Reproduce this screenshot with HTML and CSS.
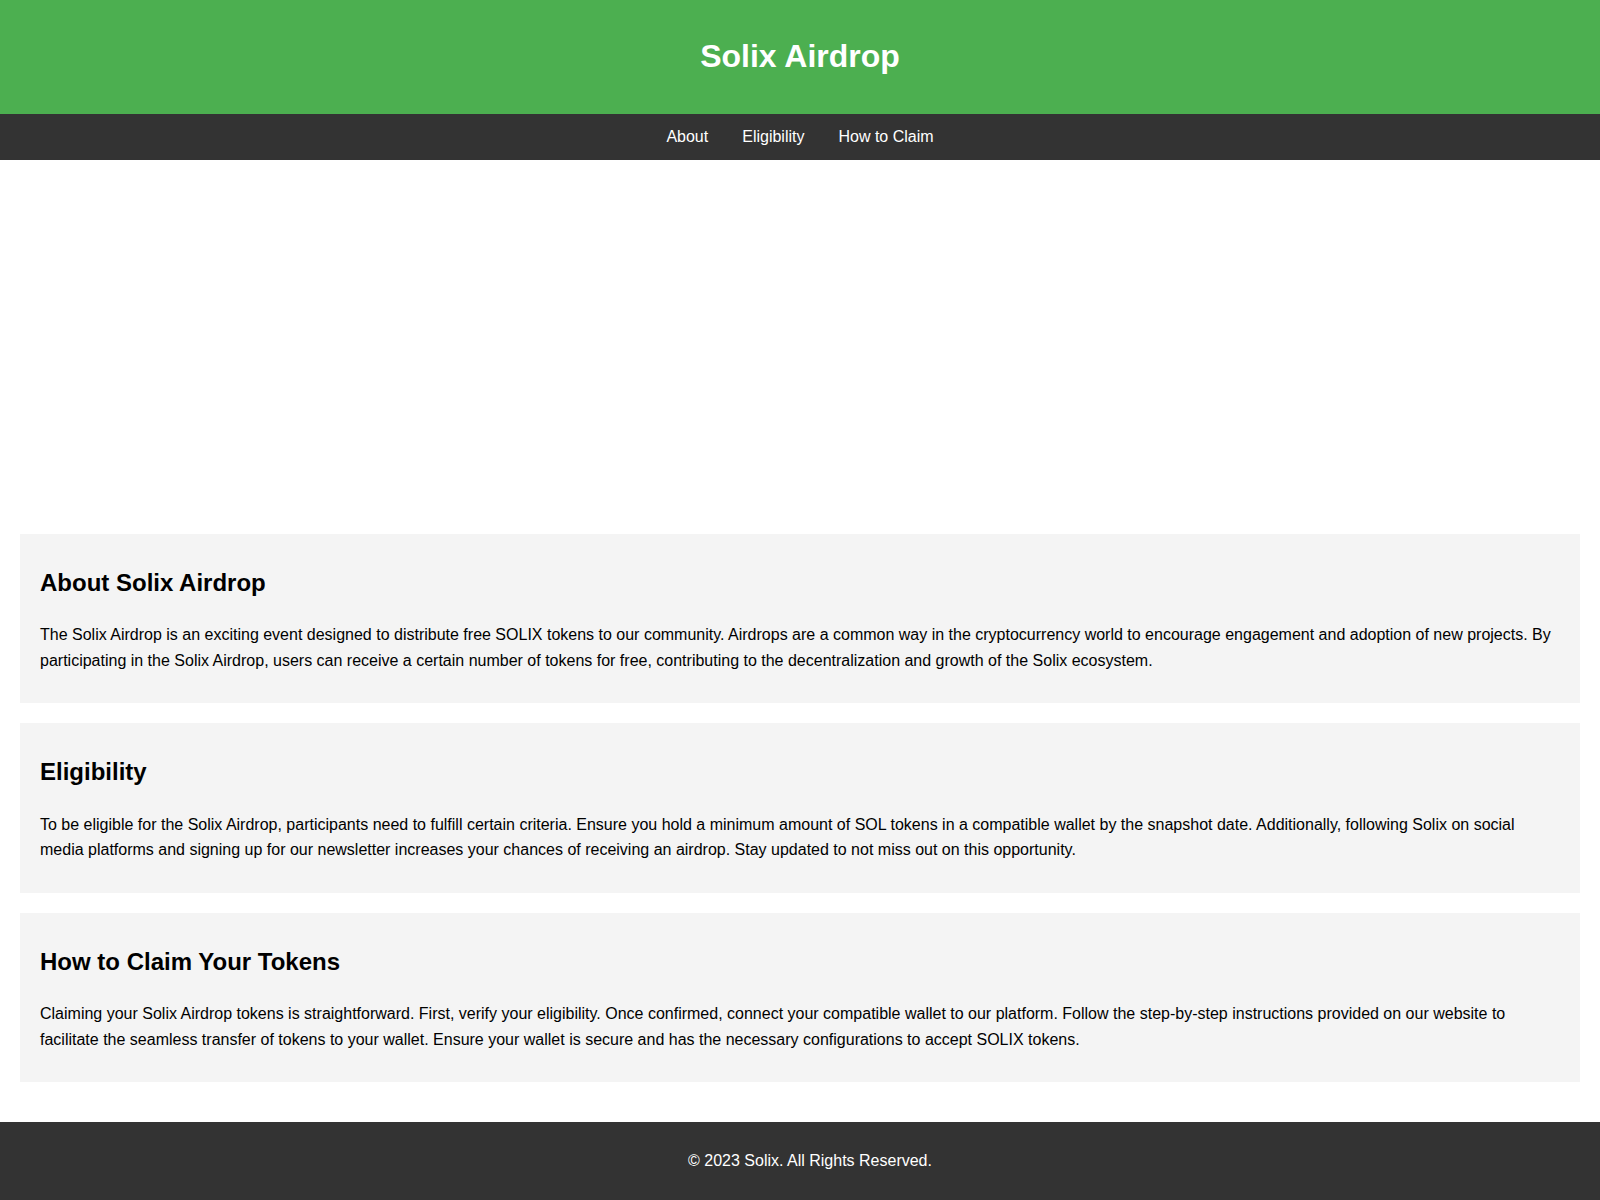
FILE: index.html
```html
<!DOCTYPE html>
<html lang="en">
<head>
    <meta charset="UTF-8">
    <meta name="viewport" content="width=device-width, initial-scale=1.0">
    <title>Solix Airdrop</title>
    <link rel="stylesheet" href="styles.css">
</head>
<body>
    <header>
        <h1>Solix Airdrop</h1>
    </header>
    <nav>
        <a href="#about">About</a>
        <a href="#eligibility">Eligibility</a>
        <a href="#claim">How to Claim</a>
    </nav>
    <main>
        <div class="hero"></div>
        <section id="about">
            <h2>About Solix Airdrop</h2>
            <p>The Solix Airdrop is an exciting event designed to distribute free SOLIX tokens to our community. Airdrops are a common way in the cryptocurrency world to encourage engagement and adoption of new projects. By participating in the Solix Airdrop, users can receive a certain number of tokens for free, contributing to the decentralization and growth of the Solix ecosystem.</p>
        </section>
        <section id="eligibility">
            <h2>Eligibility</h2>
            <p>To be eligible for the Solix Airdrop, participants need to fulfill certain criteria. Ensure you hold a minimum amount of SOL tokens in a compatible wallet by the snapshot date. Additionally, following Solix on social media platforms and signing up for our newsletter increases your chances of receiving an airdrop. Stay updated to not miss out on this opportunity.</p>
        </section>
        <section id="claim">
            <h2>How to Claim Your Tokens</h2>
            <p>Claiming your Solix Airdrop tokens is straightforward. First, verify your eligibility. Once confirmed, connect your compatible wallet to our platform. Follow the step-by-step instructions provided on our website to facilitate the seamless transfer of tokens to your wallet. Ensure your wallet is secure and has the necessary configurations to accept SOLIX tokens.</p>
        </section>
    </main>
    <footer>
        <p>&copy; 2023 Solix. All Rights Reserved.</p>
    </footer>
</body>
</html>
```

FILE: styles.css
```css
body {
    font-family: 'Liberation Sans', Arial, sans-serif;
    margin: 0;
    padding: 0;
    line-height: 1.6;
    color: #000;
}

header {
    background-color: #4caf50;
    color: #fff;
    text-align: center;
    padding: 10px 0;
}

header h1 {
    margin: 0.67em 0;
    font-size: 32px;
}

nav {
    background-color: #333;
    display: flex;
    justify-content: center;
    gap: 34px;
    padding: 10px 0;
}

nav a {
    color: #fff;
    text-decoration: none;
}

main {
    padding: 20px;
}

.hero {
    height: 334px;
    margin-bottom: 20px;
}

section {
    background-color: #f4f4f4;
    padding: 30px 20px;
    margin-bottom: 20px;
}

section h2 {
    font-size: 24px;
    margin: 0 0 20px;
}

section p {
    margin: 0;
}

footer {
    background-color: #333;
    color: #fff;
    text-align: center;
    padding: 10px 0 10px 20px;
}
```
